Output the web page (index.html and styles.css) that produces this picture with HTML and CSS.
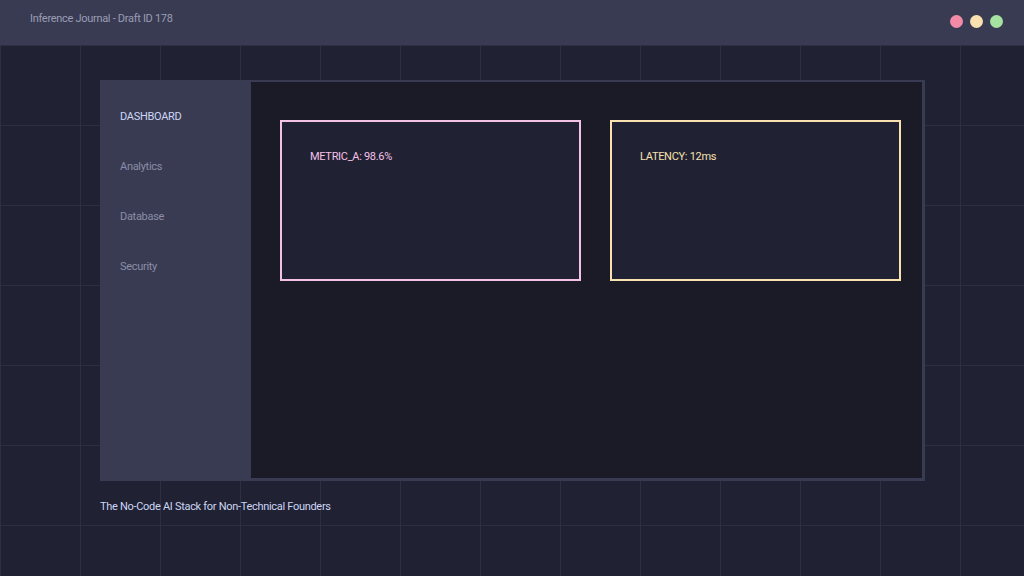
FILE: index.html
```html
<!DOCTYPE html>
<html lang="en">
<head>
    <meta charset="UTF-8">
    <title>Inference Journal - Draft ID 178</title>
    <link rel="stylesheet" href="styles.css">
</head>
<body>
    <div class="topbar">
        <span class="title">Inference Journal - Draft ID 178</span>
        <div class="dots">
            <i class="dot red"></i>
            <i class="dot yellow"></i>
            <i class="dot green"></i>
        </div>
    </div>
    <div class="stage">
        <div class="panel">
            <ul class="side">
                <li class="active">DASHBOARD</li>
                <li>Analytics</li>
                <li>Database</li>
                <li>Security</li>
            </ul>
            <div class="main">
                <div class="card pink">METRIC_A: 98.6%</div>
                <div class="card gold">LATENCY: 12ms</div>
            </div>
        </div>
        <p class="caption">The No-Code AI Stack for Non-Technical Founders</p>
    </div>
</body>
</html>
```

FILE: styles.css
```css
*{margin: 0;padding: 0;box-sizing: border-box;}
ul,li{list-style: none;}
html,body{height: 100%;}
body{font-size: 11px;font-family: Roboto, "Liberation Sans", sans-serif;letter-spacing: -0.3px;background: #202133;color: #cdd6f4;overflow: hidden;}

.topbar{height: 45px;background: #393b53;display: flex;justify-content: space-between;align-items: flex-start;padding: 0 21px 0 30px;}
.topbar .title{color: #9a9db3;margin-top: 12px;}
.dots{display: flex;gap: 7px;margin-top: 15px;}
.dot{display: block;width: 13px;height: 13px;border-radius: 50%;}
.dot.red{background: #f38ba8;}
.dot.yellow{background: #f9e2af;}
.dot.green{background: #a6e3a1;}

.stage{height: calc(100% - 45px);padding: 35px 100px 0;
    background-image: linear-gradient(to right, #2d2f42 1px, transparent 1px), linear-gradient(to bottom, #2d2f42 1px, transparent 1px);
    background-size: 80px 80px;}

.panel{width: 825px;height: 401px;display: flex;border: 3px solid #393b53;border-top-width: 2px;border-left: none;background: #1b1a27;}
.side{width: 151px;background: #393b53;padding: 28px 20px;display: flex;flex-direction: column;gap: 36px;}
.side li{height: 14px;line-height: 14px;color: #8b8ea6;}
.side li.active{color: #cdd6f4;}

.main{flex: 1;padding: 38px 21px 0 29px;display: flex;align-items: flex-start;gap: 29px;}
.card{height: 161px;border: 2px solid;background: #202133;padding: 28px 28px;line-height: 14px;}
.card.pink{width: 301px;border-color: #f5c2e7;color: #f5c2e7;}
.card.gold{width: 291px;border-color: #f9e2af;color: #f9e2af;}

.caption{margin-top: 19px;color: #cdd6f4;line-height: 14px;}
```
